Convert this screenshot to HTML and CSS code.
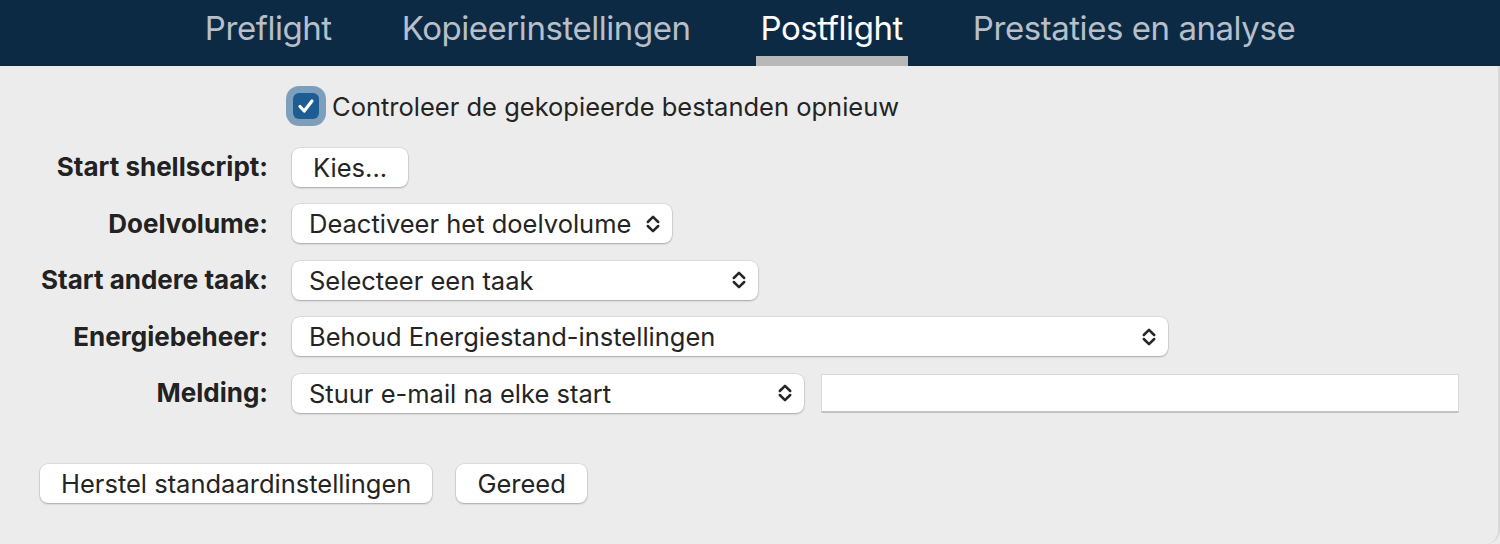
FILE: index.html
```html
<!DOCTYPE html>
<html lang="nl">
<head>
<meta charset="utf-8">
<title>Postflight</title>
<link rel="stylesheet" href="styles.css">
</head>
<body>
<div class="window">
  <header class="tabbar">
    <nav class="tabs">
      <span class="tab">Preflight</span>
      <span class="tab">Kopieerinstellingen</span>
      <span class="tab active">Postflight</span>
      <span class="tab">Prestaties en analyse</span>
    </nav>
  </header>
  <main class="content">
    <div class="check-row">
      <span class="checkbox">
        <svg viewBox="0 0 26 26" width="26" height="26"><path d="M7 13.5 L11.2 18 L19 8" fill="none" stroke="#fff" stroke-width="3.2" stroke-linecap="round" stroke-linejoin="round"/></svg>
      </span>
      <span class="check-label">Controleer de gekopieerde bestanden opnieuw</span>
    </div>
    <div class="form">
      <label class="label">Start shellscript:</label>
      <div class="field"><button class="btn">Kies...</button></div>

      <label class="label">Doelvolume:</label>
      <div class="field"><div class="select w-doel"><span>Deactiveer het doelvolume</span><svg class="chev" viewBox="0 0 14 20" width="14" height="20"><path d="M1.8 8 L7 2.8 L12.2 8 M1.8 12 L7 17.2 L12.2 12" fill="none" stroke="#262626" stroke-width="2.5" stroke-linecap="round" stroke-linejoin="round"/></svg></div></div>

      <label class="label">Start andere taak:</label>
      <div class="field"><div class="select w-taak"><span>Selecteer een taak</span><svg class="chev" viewBox="0 0 14 20" width="14" height="20"><path d="M1.8 8 L7 2.8 L12.2 8 M1.8 12 L7 17.2 L12.2 12" fill="none" stroke="#262626" stroke-width="2.5" stroke-linecap="round" stroke-linejoin="round"/></svg></div></div>

      <label class="label">Energiebeheer:</label>
      <div class="field"><div class="select w-energie"><span>Behoud Energiestand-instellingen</span><svg class="chev" viewBox="0 0 14 20" width="14" height="20"><path d="M1.8 8 L7 2.8 L12.2 8 M1.8 12 L7 17.2 L12.2 12" fill="none" stroke="#262626" stroke-width="2.5" stroke-linecap="round" stroke-linejoin="round"/></svg></div></div>

      <label class="label">Melding:</label>
      <div class="field"><div class="select w-melding"><span>Stuur e-mail na elke start</span><svg class="chev" viewBox="0 0 14 20" width="14" height="20"><path d="M1.8 8 L7 2.8 L12.2 8 M1.8 12 L7 17.2 L12.2 12" fill="none" stroke="#262626" stroke-width="2.5" stroke-linecap="round" stroke-linejoin="round"/></svg></div><div class="textfield"></div></div>
    </div>
    <div class="actions">
      <button class="btn">Herstel standaardinstellingen</button>
      <button class="btn">Gereed</button>
    </div>
  </main>
</div>
</body>
</html>
```
FILE: styles.css
```css
html, body {
  margin: 0;
  padding: 0;
  background: #ececec;
}
body {
  font-family: "Inter", "Liberation Sans", sans-serif;
  color: #242424;
}
.window {
  width: 1500px;
  height: 544px;
  display: flex;
  flex-direction: column;
  overflow: hidden;
}
.tabbar {
  height: 66px;
  background: #0d2a45;
  display: flex;
  justify-content: center;
  box-sizing: border-box;
}
.tabs {
  display: flex;
  gap: 60px;
  height: 66px;
}
.tab {
  padding: 0 5px;
  font-size: 33px;
  line-height: 56px;
  color: #b7bfc8;
  border-bottom: 10px solid transparent;
  letter-spacing: -0.45px;
}
.tab.active {
  color: #ffffff;
  border-bottom-color: #b8b8b8;
}
.content {
  flex: 1;
  background: #ececec;
  border-right: 2px solid #d9d9d9;
  border-bottom-right-radius: 14px;
  font-size: 25.5px;
}
.check-row {
  display: flex;
  align-items: center;
  gap: 7px;
  margin: 20px 0 0 286px;
  height: 40px;
}
.checkbox {
  width: 26px;
  height: 26px;
  border-radius: 6px;
  background: #1d5d94;
  box-shadow: 0 0 0 7px #7e9fbc;
  display: flex;
  align-items: center;
  justify-content: center;
  margin-left: 7px;
}
.checkbox svg { display: block; }
.check-label {
  margin-left: 6px;
}
.form {
  display: grid;
  grid-template-columns: 268px 1fr;
  column-gap: 24px;
  row-gap: 16.5px;
  margin-top: 21px;
}
.label {
  font-weight: 700;
  font-size: 26px;
  text-align: right;
  line-height: 40px;
  color: #222;
}
.field {
  display: flex;
  align-items: center;
  gap: 17px;
  height: 40px;
}
.btn {
  font-family: inherit;
  font-size: 25.5px;
  color: #242424;
  background: #fff;
  border: none;
  border-radius: 8px;
  height: 39px;
  padding: 0 21px;
  box-shadow: 0 0 0 0.5px rgba(0,0,0,0.12), 0 1px 2px rgba(0,0,0,0.25);
}
.select {
  background: #fff;
  border-radius: 8px;
  height: 39px;
  box-sizing: border-box;
  padding: 0 12px 0 17px;
  display: flex;
  align-items: center;
  justify-content: space-between;
  box-shadow: 0 0 0 0.5px rgba(0,0,0,0.12), 0 1px 2px rgba(0,0,0,0.25);
}
.chev { display: block; flex: none; }
.w-doel { width: 380px; }
.w-taak { width: 466px; }
.w-energie { width: 876px; }
.w-melding { width: 512px; }
.textfield {
  width: 638px;
  height: 39px;
  box-sizing: border-box;
  background: #fff;
  border: 1px solid #dadada;
  border-bottom: 2px solid #c3c3c3;
}
.actions {
  display: flex;
  gap: 24px;
  margin: 51px 0 0 40px;
}
```
